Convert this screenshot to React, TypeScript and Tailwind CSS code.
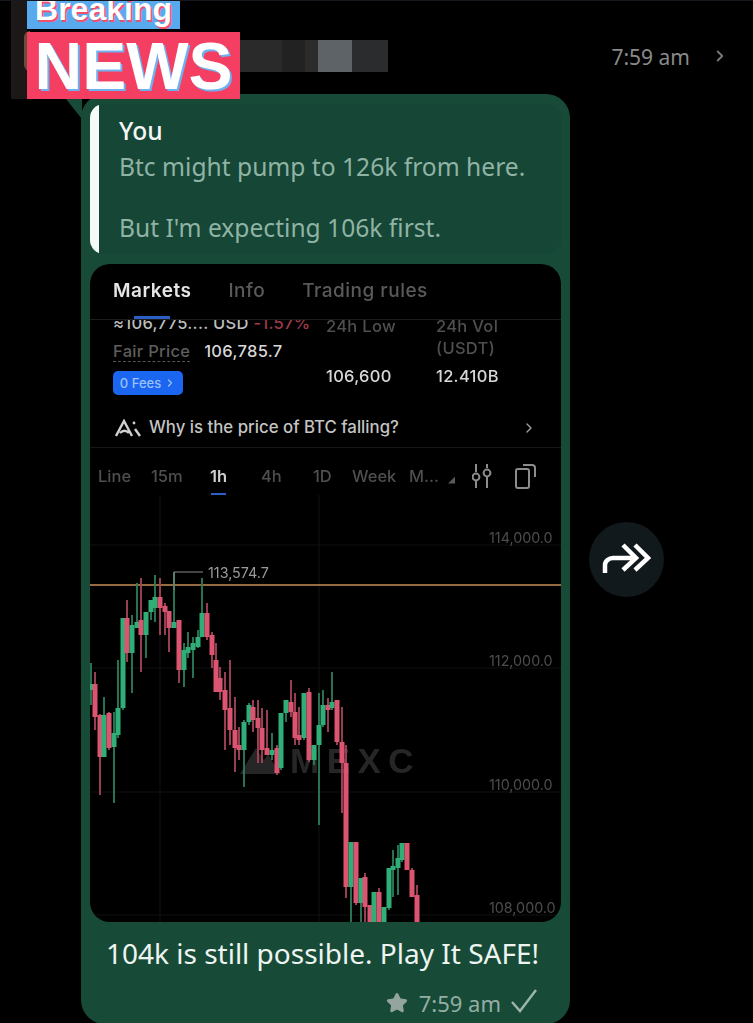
import { ChevronRight, Star } from 'lucide-react';

type Candle = [number, number, number, number, number, 'g' | 'r'];

// x, wick top, wick bottom, body top, body bottom, colour (page coordinates)
const candles: Candle[] = [
  [91, 663, 705, 684, 690, 'g'],
  [95, 672, 730, 684, 717, 'r'],
  [100, 714, 795, 715, 757, 'r'],
  [104, 697, 757, 715, 757, 'g'],
  [109, 712, 750, 713, 748, 'r'],
  [114, 712, 803, 733, 747, 'g'],
  [118, 660, 738, 708, 735, 'g'],
  [123, 618, 710, 618, 708, 'g'],
  [127, 600, 662, 618, 653, 'r'],
  [132, 615, 693, 625, 653, 'g'],
  [137, 583, 628, 622, 628, 'g'],
  [141, 578, 672, 620, 635, 'r'],
  [146, 612, 658, 612, 635, 'g'],
  [151, 600, 620, 600, 612, 'g'],
  [155, 575, 622, 597, 608, 'g'],
  [160, 578, 635, 597, 608, 'r'],
  [165, 603, 635, 606, 612, 'r'],
  [169, 611, 652, 611, 628, 'r'],
  [174, 572, 628, 622, 628, 'g'],
  [179, 620, 683, 620, 670, 'r'],
  [184, 643, 687, 650, 670, 'g'],
  [188, 632, 658, 647, 653, 'g'],
  [193, 637, 678, 643, 650, 'g'],
  [198, 630, 648, 637, 647, 'g'],
  [202, 578, 637, 613, 637, 'g'],
  [207, 603, 640, 613, 637, 'r'],
  [212, 632, 668, 635, 655, 'r'],
  [216, 643, 692, 660, 692, 'r'],
  [220, 667, 700, 678, 692, 'r'],
  [225, 672, 750, 690, 710, 'r'],
  [230, 660, 745, 708, 730, 'r'],
  [235, 697, 772, 730, 748, 'r'],
  [239, 727, 760, 745, 750, 'r'],
  [244, 720, 787, 722, 750, 'g'],
  [249, 703, 725, 705, 722, 'g'],
  [253, 700, 732, 707, 720, 'r'],
  [258, 700, 763, 718, 728, 'r'],
  [262, 708, 763, 728, 750, 'r'],
  [267, 710, 755, 748, 755, 'r'],
  [272, 733, 760, 750, 755, 'g'],
  [277, 745, 775, 748, 773, 'r'],
  [281, 713, 770, 713, 768, 'g'],
  [286, 700, 722, 700, 713, 'g'],
  [291, 680, 717, 702, 712, 'r'],
  [295, 693, 745, 712, 738, 'r'],
  [299, 707, 745, 735, 740, 'r'],
  [304, 693, 740, 693, 738, 'g'],
  [309, 688, 762, 692, 760, 'r'],
  [314, 745, 765, 745, 760, 'g'],
  [319, 693, 825, 725, 745, 'g'],
  [323, 690, 727, 705, 725, 'g'],
  [328, 698, 732, 705, 710, 'r'],
  [332, 672, 710, 702, 708, 'g'],
  [337, 700, 745, 700, 742, 'r'],
  [342, 707, 813, 742, 763, 'r'],
  [346, 745, 898, 763, 887, 'r'],
  [351, 842, 925, 842, 887, 'g'],
  [356, 842, 905, 842, 903, 'r'],
  [361, 878, 925, 878, 903, 'g'],
  [365, 873, 925, 877, 907, 'r'],
  [370, 905, 925, 905, 925, 'r'],
  [374, 892, 925, 892, 925, 'g'],
  [379, 888, 925, 892, 925, 'r'],
  [384, 907, 925, 907, 925, 'g'],
  [389, 868, 910, 868, 908, 'g'],
  [393, 850, 897, 866, 870, 'g'],
  [398, 845, 895, 858, 868, 'g'],
  [402, 843, 862, 843, 860, 'g'],
  [407, 843, 870, 843, 870, 'r'],
  [412, 868, 897, 870, 897, 'r'],
  [417, 885, 925, 895, 925, 'r'],
];

function CandleChart() {
  return (
    <svg viewBox="90 495 471 427" className="block h-[427px] w-[471px] blur-[0.4px]">
      {[545, 668, 792, 915].map((y) => (
        <line key={y} x1="90" x2="561" y1={y} y2={y} stroke="#111111" />
      ))}
      {[160, 319].map((x) => (
        <line key={x} x1={x} x2={x} y1="495" y2="922" stroke="#121212" />
      ))}
      <g fill="#262626">
        <path d="M240 774 L256 748 L264 760 L268 754 L280 774 Z" />
        <text x="290" y="773" fontSize="35" fontWeight="700" letterSpacing="7.5" fontFamily="'Liberation Sans', sans-serif">
          MEXC
        </text>
      </g>
      <line x1="90" x2="561" y1="585" y2="585" stroke="#c98f55" strokeWidth="1.5" />
      {candles.map(([x, wt, wb, bt, bb, c]) => (
        <g key={x}>
          <rect x={x - 0.9} y={wt} width="1.8" height={wb - wt} fill={c === 'g' ? '#2c7f5c' : '#a8455b'} />
          <rect x={x - 2.5} y={bt} width="5" height={bb - bt} fill={c === 'g' ? '#2fae78' : '#dc5570'} />
        </g>
      ))}
      <path d="M174 590 V572 H203" fill="none" stroke="#8a8a8a" strokeWidth="1" />
      <g fontFamily="'Inter', sans-serif" fontSize="14.3">
        <text x="208" y="578" fill="#9a9a9a">113,574.7</text>
        <text x="489" y="543" fill="#4d4d4d">114,000.0</text>
        <text x="489" y="666" fill="#4d4d4d">112,000.0</text>
        <text x="489" y="790" fill="#4d4d4d">110,000.0</text>
        <text x="489" y="913" fill="#4d4d4d">108,000.0</text>
      </g>
    </svg>
  );
}

function MarketShot() {
  return (
    <div className="h-[658px] w-[471px] overflow-hidden rounded-[20px] bg-black font-['Inter',sans-serif] blur-[0.5px]">
      <div className="relative flex h-[56px] items-center gap-[37px] border-b border-[#1c1c1c] pl-[23px] text-[19px] font-medium tracking-[0.5px] text-[#5a5a5a]">
        <span className="font-semibold text-[#e6e6e6]">Markets</span>
        <span>Info</span>
        <span>Trading rules</span>
        <div className="absolute bottom-0 left-[44px] h-[3px] w-[36px] bg-[#2c5fc4]" />
      </div>

      <div className="h-[88px] overflow-hidden">
        <div className="-mt-[5px] grid grid-cols-[213px_110px_1fr] pl-[23px] text-[16.5px] leading-[22px] tracking-[0.3px]">
          <div>
            <div className="-mt-[3px] h-[22px] whitespace-nowrap font-medium text-[#bdbdbd]">
              ≈106,775.... USD <span className="text-[#9c3a4a]">-1.57%</span>
            </div>
            <div className="mt-[6px] flex h-[22px] items-center gap-[14px]">
              <span className="border-b border-dashed border-[#555] font-medium leading-[20px] text-[#5e5e5e]">Fair Price</span>
              <span className="font-medium text-[#d8d8d8]">106,785.7</span>
            </div>
            <div className="mt-[9px] flex h-[24px] w-[70px] items-center justify-center gap-[3px] rounded-[5px] bg-[#1a66f0] text-[13px] font-medium tracking-normal text-[#9cc0fb]">
              0 Fees
              <ChevronRight size={12} strokeWidth={2.5} />
            </div>
          </div>
          <div className="font-medium">
            <div className="h-[22px] text-[#4f4f4f]">24h Low</div>
            <div className="mt-[28px] h-[22px] text-[#d8d8d8]">106,600</div>
          </div>
          <div className="font-medium">
            <div className="h-[22px] text-[#4f4f4f]">24h Vol</div>
            <div className="h-[22px] text-[#4f4f4f]">(USDT)</div>
            <div className="mt-[6px] h-[22px] text-[#d8d8d8]">12.410B</div>
          </div>
        </div>
      </div>

      <div className="flex h-[40px] items-center border-b border-[#161616] pl-[25px] pr-[24px] text-[16.8px] font-medium text-[#c4c4c4]">
        <svg viewBox="0 0 26 20" className="mr-[8px] h-[20px] w-[26px] shrink-0" fill="none" stroke="#d0d0d0" strokeWidth="2.4">
          <path d="M1 18 L9 3 L17 18 M5 15 C8 12 11 12 14 15" />
          <circle cx="19" cy="5" r="1.4" fill="#d0d0d0" stroke="none" />
          <path d="M20 11 L25 18" />
        </svg>
        Why is the price of BTC falling?
        <ChevronRight size={16} strokeWidth={2} className="ml-auto text-[#a0a0a0]" />
      </div>

      <div className="relative flex h-[47px] items-center pl-[8px] pt-[9px] text-[16.5px] font-medium text-[#4f4f4f]">
        <span className="w-[53px]">Line</span>
        <span className="w-[59px]">15m</span>
        <span className="w-[51px] font-semibold text-[#d0d0d0]">1h</span>
        <span className="w-[52px]">4h</span>
        <span className="w-[39px]">1D</span>
        <span className="w-[57px]">Week</span>
        <span>M...</span>
        <div className="ml-[9px] mt-[8px] h-[7px] w-[7px] bg-[#5a5a5a] [clip-path:polygon(100%_0,100%_100%,0_100%)]" />
        <svg viewBox="0 0 20 26" className="ml-[17px] h-[26px] w-[20px]" fill="none" stroke="#8c8c8c" strokeWidth="2">
          <path d="M4 1 V9 M4 18 V25 M15 1 V5 M15 14 V25" />
          <circle cx="4" cy="14" r="3.4" />
          <circle cx="15" cy="10" r="3.4" />
        </svg>
        <svg viewBox="0 0 24 26" className="ml-[22px] h-[26px] w-[24px]" fill="none" stroke="#8c8c8c" strokeWidth="2">
          <rect x="2" y="6" width="13" height="19" rx="2" />
          <path d="M9 2 H18 C20 2 21 3 21 5 V14" />
        </svg>
        <div className="absolute bottom-0 left-[121px] h-[2px] w-[15px] bg-[#2c5fc4]" />
      </div>

      <CandleChart />
    </div>
  );
}

export default function App() {
  return (
    <div className="relative h-[1023px] w-[753px] overflow-hidden border-t border-[#14171b] bg-black font-['Noto_Sans',sans-serif]">
      <header className="flex h-[93px] items-start pl-[240px] pt-[39px]">
        <div className="flex h-[32px] w-[148px] blur-[0.7px]">
          <div className="w-[42px] bg-[#2a2a2a]" />
          <div className="w-[23px] bg-[#222222]" />
          <div className="w-[13px] bg-[#2b2b2b]" />
          <div className="w-[34px] bg-[#5e6367]" />
          <div className="w-[36px] bg-[#2b2c2d]" />
        </div>
        <span className="ml-auto mt-[2px] text-[21px] leading-[30px] text-[#8a8a8a]">7:59 am</span>
        <ChevronRight size={18} strokeWidth={2.5} className="ml-[21px] mr-[24px] mt-[7px] text-[#777777]" />
      </header>

      <div className="flex items-center pl-[81px]">
        <div className="flex h-[930px] w-[489px] shrink-0 flex-col rounded-[24px] bg-[#174b38] px-[9px] pt-[10px]">
          <div className="flex h-[150px] overflow-hidden rounded-[14px] bg-[#164636]">
            <div className="w-[9px] rounded-l-[12px] bg-[#f4fbf8]" />
            <div className="pl-[20px] pt-[12px] text-[24.6px] leading-[30px] text-[#8fb3a4]">
              <div className="h-[36px] font-medium text-[#f4f7f5]">You</div>
              <div>Btc might pump to 126k from here.</div>
              <div className="mt-[31px]">But I'm expecting 106k first.</div>
            </div>
          </div>
          <div className="mt-[10px]">
            <MarketShot />
          </div>
          <p className="mt-[12px] pr-[6px] text-center text-[28px] leading-[38px] text-[#eef5f1]">
            104k is still possible. Play It SAFE!
          </p>
          <div className="mt-[16px] flex items-center justify-end pr-[24px] text-[22px] leading-[30px] text-[#94aea4]">
            <Star size={22} fill="#94a5a0" stroke="#94a5a0" />
            <span className="ml-[11px]">7:59 am</span>
            <svg viewBox="0 0 26 24" className="ml-[10px] -mt-[4px] h-[24px] w-[26px]" fill="none" stroke="#9db5ab" strokeWidth="2.4">
              <path d="M1 13 L9 22 L25 1" />
            </svg>
          </div>
        </div>
        <button className="ml-[19px] flex h-[75px] w-[75px] shrink-0 items-center justify-center rounded-full bg-[#11191d]">
          <svg viewBox="0 0 75 75" className="h-[75px] w-[75px]" fill="none" stroke="#ffffff" strokeWidth="4.5">
            <path d="M16 51 V43 C16 39 20 36 24 36 H45" />
            <path d="M34 23 L47 36 L34 48" />
            <path d="M46 23 L59 36 L46 48" />
          </svg>
        </button>
      </div>

      {/* overlays on top of the chat header */}
      <div className="absolute left-[62px] top-[93px] h-[25px] w-[20px] bg-[#174b38] [clip-path:polygon(0_0,100%_0,100%_100%)]" />
      <div className="absolute left-[11px] top-0 h-[98px] w-[16px] bg-[#1c1818]" />
      <div className="absolute left-[24px] top-[30px] h-[40px] w-[6px] rounded-l-full bg-[#6e4a3c]" />
      <div className="absolute left-[27px] top-[-1px] flex h-[29px] w-[153px] items-end justify-center overflow-hidden bg-[#59a9ee] pb-[2px] font-['Liberation_Sans',sans-serif] text-[32px] font-bold leading-[36px] text-white [text-shadow:1.5px_1.5px_0_#f0506e]">
        Breaking
      </div>
      <div className="absolute left-[27px] top-[31px] flex h-[67px] w-[213px] items-center justify-center bg-[#f43f63] font-['Liberation_Sans',sans-serif] text-[66px] font-bold leading-none text-white [text-shadow:2px_2px_0_#6fb0ee]">
        NEWS
      </div>
    </div>
  );
}
